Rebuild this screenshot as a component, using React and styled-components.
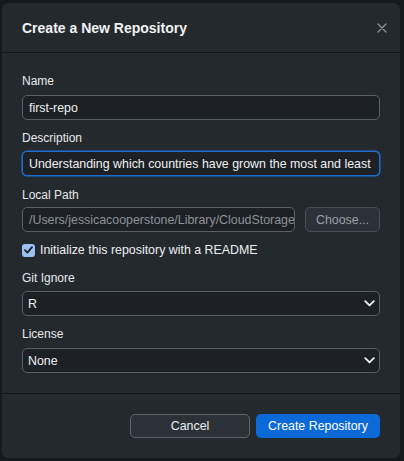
import React from "react";
import styled, { createGlobalStyle } from "styled-components";

const Global = createGlobalStyle`
  html, body { margin: 0; padding: 0; background: #16191c; }
  body { font-family: "Liberation Sans", Arial, sans-serif; -webkit-font-smoothing: antialiased; }
  * { box-sizing: border-box; }
`;

const Page = styled.div`
  width: 404px;
  height: 461px;
  padding: 3px 4px 3px 2px;
  display: flex;
`;

const Dialog = styled.div`
  flex: 1;
  background: #24292e;
  border-radius: 6px;
  display: flex;
  flex-direction: column;
  overflow: hidden;
`;

const Header = styled.div`
  height: 50px;
  flex-shrink: 0;
  padding: 0 10px 0 20px;
  display: flex;
  align-items: center;
  justify-content: space-between;
  border-bottom: 1px solid #141619;
`;

const Title = styled.h1`
  margin: 0;
  font-size: 14px;
  font-weight: 700;
  color: #f0f2f4;
  padding-top: 1px;
`;

const Close = styled.button`
  width: 16px;
  height: 16px;
  padding: 0;
  border: none;
  background: none;
  display: flex;
  align-items: center;
  justify-content: center;
  color: #8b9198;
`;

const Content = styled.div`
  padding: 21px 20px 20px 20px;
  display: flex;
  flex-direction: column;
  flex-shrink: 0;
  border-bottom: 1px solid #141619;
`;

const Field = styled.div`
  display: flex;
  flex-direction: column;
  gap: ${(p) => p.$gap || 5}px;
  margin-bottom: ${(p) => p.$mb ?? 11}px;
`;

const Label = styled.label`
  font-size: 12px;
  line-height: 15px;
  color: #e6e8ea;
`;

const Input = styled.div`
  height: 25px;
  flex: ${(p) => (p.$grow ? "1 1 0" : "0 0 25px")};
  border-radius: 5px;
  background: #1d2024;
  border: ${(p) => (p.$focus ? "1.5px solid #1f6fd1" : "1px solid #5a6068")};
  box-shadow: ${(p) => (p.$focus ? "0 0 0 0.5px #1f6fd1" : "none")};
  padding: 0 6px;
  display: flex;
  align-items: center;
  font-size: 12.4px;
  color: ${(p) => (p.$disabled ? "#8c9299" : "#eef0f2")};
  white-space: nowrap;
  overflow: hidden;
  min-width: 0;
`;

const Row = styled.div`
  display: flex;
  gap: 10px;
  height: 25px;
`;

const GhostButton = styled.button`
  width: ${(p) => p.$w}px;
  height: ${(p) => p.$h || 25}px;
  border-radius: 5px;
  background: #2b3137;
  border: 1px solid ${(p) => (p.$dim ? "#484e55" : "#5d636a")};
  color: ${(p) => (p.$dim ? "#9aa0a7" : "#eceef0")};
  font-family: inherit;
  font-size: 12.4px;
  padding: 0;
  flex-shrink: 0;
`;

const CheckRow = styled.div`
  display: flex;
  align-items: center;
  gap: 5px;
  margin: 0 0 14px 0;
  height: 14px;
`;

const Box = styled.span`
  width: 13px;
  height: 13px;
  border-radius: 3px;
  background: #9bc2f2;
  display: flex;
  align-items: center;
  justify-content: center;
`;

const CheckText = styled.span`
  font-size: 12.4px;
  color: #eceef0;
`;

const Select = styled(Input)`
  justify-content: space-between;
  padding: 0 4px 0 5px;
`;

const Footer = styled.div`
  flex: 1;
  display: flex;
  justify-content: flex-end;
  align-items: flex-start;
  gap: 6px;
  padding: 20px 20px 0 0;
`;

const Primary = styled.button`
  width: 124px;
  height: 24px;
  border-radius: 5px;
  border: none;
  background: #0b69d8;
  color: #ffffff;
  font-family: inherit;
  font-size: 12.4px;
  padding: 0;
`;

const Chevron = () => (
  <svg width="11" height="7" viewBox="0 0 11 7">
    <path d="M1.2 1.2 L5.5 5.3 L9.8 1.2" fill="none" stroke="#f2f4f6" strokeWidth="1.8" strokeLinecap="round" strokeLinejoin="round" />
  </svg>
);

export default function App() {
  return (
    <>
      <Global />
      <Page>
        <Dialog>
          <Header>
            <Title>Create a New Repository</Title>
            <Close aria-label="close">
              <svg width="10" height="10" viewBox="0 0 10 10">
                <path d="M1 1 L9 9 M9 1 L1 9" stroke="currentColor" strokeWidth="1.3" strokeLinecap="round" />
              </svg>
            </Close>
          </Header>
          <Content>
            <Field $gap={6}>
              <Label>Name</Label>
              <Input>first-repo</Input>
            </Field>
            <Field $gap={5} $mb={12}>
              <Label>Description</Label>
              <Input $focus>Understanding which countries have grown the most and least</Input>
            </Field>
            <Field $gap={4}>
              <Label>Local Path</Label>
              <Row>
                <Input $grow $disabled>/Users/jessicacooperstone/Library/CloudStorage</Input>
                <GhostButton $w={75} $dim>Choose...</GhostButton>
              </Row>
            </Field>
            <CheckRow>
              <Box>
                <svg width="9" height="8" viewBox="0 0 9 8">
                  <path d="M1 4.2 L3.4 6.6 L8 1.2" fill="none" stroke="#1f2327" strokeWidth="1.8" strokeLinecap="round" strokeLinejoin="round" />
                </svg>
              </Box>
              <CheckText>Initialize this repository with a README</CheckText>
            </CheckRow>
            <Field $gap={5}>
              <Label>Git Ignore</Label>
              <Select>
                R
                <Chevron />
              </Select>
            </Field>
            <Field $gap={6} $mb={0}>
              <Label>License</Label>
              <Select>
                None
                <Chevron />
              </Select>
            </Field>
          </Content>
          <Footer>
            <GhostButton $w={120} $h={24}>Cancel</GhostButton>
            <Primary>Create Repository</Primary>
          </Footer>
        </Dialog>
      </Page>
    </>
  );
}
